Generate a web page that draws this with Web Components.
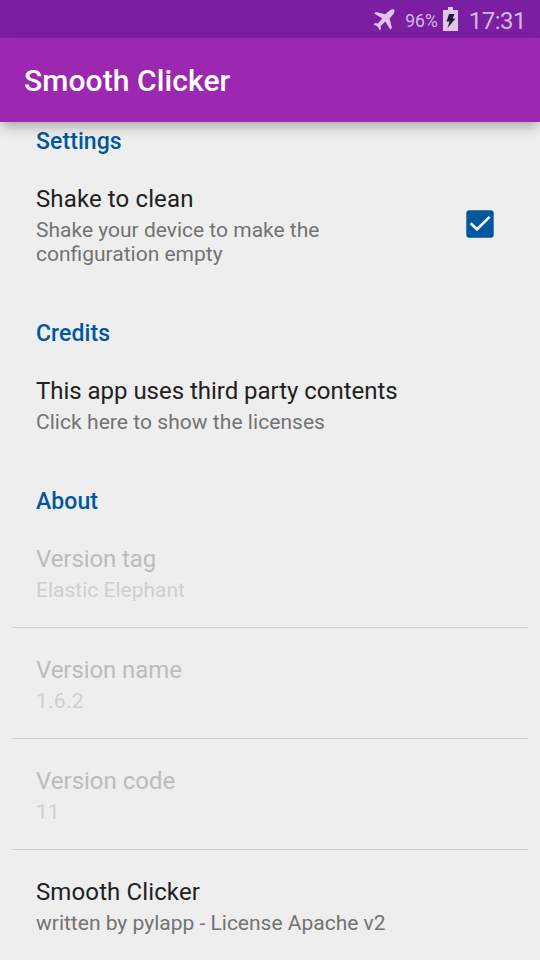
<!DOCTYPE html>
<html lang="en"><head><meta charset="utf-8"><title>Smooth Clicker</title>
<style>
body{margin:0;width:540px;height:960px;overflow:hidden;background:#eee;font-family:Roboto,sans-serif}
</style></head><body>
<app-screen></app-screen>
<script>
const define=(name,css,html)=>customElements.define(name,class extends HTMLElement{
  connectedCallback(){
    if(this.shadowRoot)return;
    const t=document.createElement('template');
    t.innerHTML=`<style>${css}</style>${html}`;
    this.attachShadow({mode:'open'}).append(t.content.cloneNode(true));
  }
});
define('status-bar',`:host{display:flex;flex:none;height:38px;background:#7b1fa2;align-items:center;justify-content:flex-end;padding-right:14px;box-sizing:border-box;color:#dec7e8;line-height:38px}
svg{display:block;flex:none;fill:currentColor}
.plane{margin-top:2px}
.pct{font-size:17.5px;margin:4px 5px 0 10px;opacity:.9}.time{font-size:24px;margin:3px 0 0 11px;letter-spacing:-.5px;opacity:.9}`,
`<svg class="plane" width="22" height="22" viewBox="0 0 22 22"><path d="M1.200 4.400 3 2.900 12.200 5.300 16.700 1.400C18.300.300 20 .200 21.300.500 21.700 2.200 21.300 3.800 20.200 5.200L16.600 9.600 18.900 18.900 17.200 20.600 12.400 12.400 7.600 16.900 8 20 6.700 21.300 4.600 17.400.700 15.500 1.900 14.100 4.900 14.400 9.300 9.500Z"/></svg>
<span class="pct">96%</span>
<svg width="15" height="24" viewBox="0 0 15 24"><path d="M5 0h5v3h5v21H0V3h5z"/><path fill="#2b123b" d="M6 7H11.500L9.500 11.500h3L4.500 21 6.500 14.500H3.500z"/></svg>
<span class="time">17:31</span>`);
define('app-bar',`:host{display:flex;flex:none;height:84px;background:#9c27b0;color:#fff;align-items:center;padding:0 24px;box-sizing:border-box;font-size:30px;font-weight:500;letter-spacing:.09px;position:relative;box-shadow:0 6px 12px -2px rgba(0,0,0,.32)}`,`<slot></slot>`);
define('pref-header',`:host{display:block;height:35px;line-height:39px;padding:0 36px;color:#01579b;font-size:23px;font-weight:500;letter-spacing:.08px}`,`<slot></slot>`);
define('pref-item',`:host{display:flex;align-items:flex-start;margin:0 12px;padding:26px 24px 0;height:111px;box-sizing:border-box;color:#212121}
:host([tall]){height:135px}:host([divided]){border-bottom:1px solid #cfcfcf}:host([disabled]){color:#bcbcbc}
.text{flex:1}.t{font-size:24px;line-height:32px;letter-spacing:var(--title-tracking,0)}.s{font-size:21px;line-height:24px;margin-top:3px;color:#737373;letter-spacing:var(--summary-tracking,0)}:host([disabled]) .s{color:#cfcfcf}`,
`<div class="text"><div class="t"><slot></slot></div><div class="s"><slot name="summary"></slot></div></div><slot name="widget"></slot>`);
define('check-box',`:host{display:block;width:28px;height:28px;margin:27px 10px 0 0}svg{display:block}`,
`<svg width="28" height="28" viewBox="0 0 28 28"><rect x=".3" y=".3" width="27.400" height="27.400" rx="3" fill="#01579b"/><path d="M4.600 13.300 11 19.300 23.600 6.900" fill="none" stroke="#eee" stroke-width="2.700"/></svg>`);
define('app-screen',`:host{display:flex;flex-direction:column;height:960px}main{display:flex;flex-direction:column}pref-header:not(:first-child){margin-top:22px}.loose{--title-tracking:.12px}`,
`<status-bar></status-bar><app-bar>Smooth Clicker</app-bar>
<main><pref-header>Settings</pref-header>
<pref-item tall class="loose">Shake to clean<span slot="summary">Shake your device to make the<br>configuration empty</span><check-box slot="widget"></check-box></pref-item>
<pref-header>Credits</pref-header>
<pref-item style="--title-tracking:-.03px;--summary-tracking:.05px">This app uses third party contents<span slot="summary">Click here to show the licenses</span></pref-item>
<pref-header>About</pref-header>
<pref-item disabled divided style="--title-tracking:-.08px">Version tag<span slot="summary">Elastic Elephant</span></pref-item>
<pref-item disabled divided style="--title-tracking:-.08px;--summary-tracking:.25px">Version name<span slot="summary">1.6.2</span></pref-item>
<pref-item disabled divided>Version code<span slot="summary">11</span></pref-item>
<pref-item class="loose">Smooth Clicker<span slot="summary">written by pylapp - License Apache v2</span></pref-item></main>`);
</script></body></html>
